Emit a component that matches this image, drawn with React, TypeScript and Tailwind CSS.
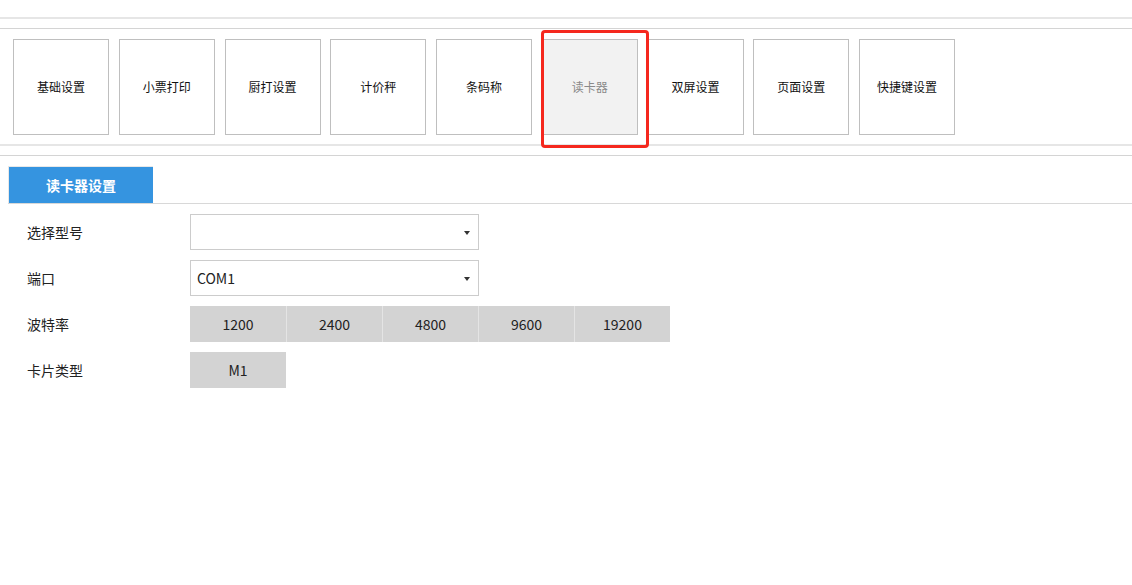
import { useState } from "react";

const menus = ["基础设置", "小票打印", "厨打设置", "计价秤", "条码称", "读卡器", "双屏设置", "页面设置", "快捷键设置"];
const bauds = ["1200", "2400", "4800", "9600", "19200"];

function Select({ value }: { value: string }) {
    return (
        <div className="relative flex h-[36px] w-[289px] items-center border border-[#cccccc] bg-white pl-[6px] text-[14px] text-[#222]">
            {value}
            <span className="absolute right-[8px] top-[16px] h-0 w-0 border-x-[3.5px] border-t-[4px] border-x-transparent border-t-[#333]" />
        </div>
    );
}

function App() {
    const [active] = useState("读卡器");

    return (
        <div
            className="relative h-[585px] w-full bg-white text-[#222]"
            style={{ fontFamily: '"Noto Sans CJK SC", "Noto Sans", sans-serif' }}
        >
            {/* top menu */}
            <div className="pt-[17px]">
                <div className="h-[2px] bg-[#e6e6e6]" />
                <div className="mt-[9px] h-px bg-[#d4d4d4]" />
                <div className="flex gap-[9.75px] px-[13px] pb-[9px] pt-[10px]">
                    {menus.map((m) => (
                        <button
                            key={m}
                            className={
                                m === active
                                    ? "flex h-[96px] w-[96px] items-center justify-center border border-[#bfbfbf] bg-[#f2f2f2] text-[12px] text-[#8a8a8a]"
                                    : "flex h-[96px] w-[96px] items-center justify-center border border-[#bfbfbf] bg-white text-[12px] text-[#111]"
                            }
                        >
                            {m}
                        </button>
                    ))}
                </div>
                <div className="h-[2px] bg-[#e6e6e6]" />
                <div className="mt-[9px] h-px bg-[#d4d4d4]" />
            </div>

            {/* tab */}
            <div className="ml-[8px] mt-[10px] flex border-b border-[#d8d8d8]">
                <div className="flex h-[37px] w-[145px] items-center justify-center border-l border-t border-[#e8e8e8] bg-[#3594e0] text-[14px] font-bold text-white">
                    读卡器设置
                </div>
            </div>

            {/* form */}
            <div className="mt-[10px] flex flex-col gap-[10px]">
                <div className="flex h-[36px] items-center">
                    <div className="w-[190px] pl-[27px] text-[14px]">选择型号</div>
                    <Select value="" />
                </div>
                <div className="flex h-[36px] items-center">
                    <div className="w-[190px] pl-[27px] text-[14px]">端口</div>
                    <Select value="COM1" />
                </div>
                <div className="flex h-[36px] items-center">
                    <div className="w-[190px] pl-[27px] text-[14px]">波特率</div>
                    <div className="flex">
                        {bauds.map((b, i) => (
                            <div
                                key={b}
                                className={
                                    i === 0
                                        ? "flex h-[36px] w-[96px] items-center justify-center bg-[#d3d3d3] text-[14px]"
                                        : "flex h-[36px] w-[96px] items-center justify-center border-l border-[#e4e4e4] bg-[#d3d3d3] text-[14px]"
                                }
                            >
                                {b}
                            </div>
                        ))}
                    </div>
                </div>
                <div className="flex h-[36px] items-center">
                    <div className="w-[190px] pl-[27px] text-[14px]">卡片类型</div>
                    <div className="flex h-[36px] w-[96px] items-center justify-center bg-[#d3d3d3] text-[14px]">M1</div>
                </div>
            </div>

            {/* highlight mark */}
            <div className="pointer-events-none absolute left-[541px] top-[30px] h-[118px] w-[108px] rounded-[4px] border-[3px] border-[#f5281e]" />
        </div>
    );
}

export default App;
